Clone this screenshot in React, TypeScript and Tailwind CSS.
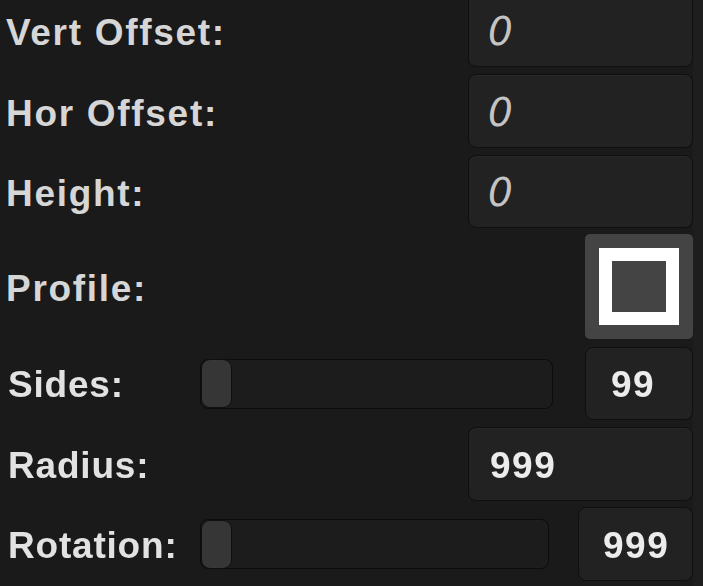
import React from "react";

const font = { fontFamily: '"Liberation Sans", Arial, sans-serif' };

function Field({ w, children }: { w: string; children: React.ReactNode }) {
  return (
    <div
      className={`${w} h-full shrink-0 rounded-[8px] bg-[#222222] border border-[#0f0f0f] flex items-center shadow-[inset_0_1px_0_rgba(255,255,255,0.03)]`}
    >
      {children}
    </div>
  );
}

function Slider({ w }: { w: string }) {
  return (
    <div className={`${w} h-[50px] shrink-0 rounded-[8px] bg-[#1c1c1c] border border-[#0c0c0c] flex items-center`}>
      <div className="w-[31px] h-[49px] rounded-[9px] bg-[#363636] border border-[#0f0f0f]" />
    </div>
  );
}

const topLabel = "pl-[6px] text-[37px] font-bold tracking-[1.7px] text-[#d6d6d6] leading-none translate-y-[2px]";
const botLabel = "pl-[8px] text-[37px] font-bold tracking-[0.8px] text-[#e2e2e2] leading-none blur-[0.7px] translate-y-[1px]";
const zero = "pl-[19px] text-[39px] italic text-[#c4c4c4] leading-none translate-y-[1px] [font-family:'DejaVu_Sans',sans-serif]";
const num = "text-[37px] font-bold tracking-[1.5px] text-[#ececec] leading-none blur-[0.6px] translate-y-[1px]";

export default function App() {
  return (
    <div className="w-[703px] h-[586px] overflow-hidden bg-[#1a1a1a] flex" style={font}>
      <div className="w-[693px] flex flex-col mt-[-7px]">
        <div className="h-[74px] flex items-center justify-between">
          <span className={topLabel}>Vert Offset:</span>
          <Field w="w-[225px]">
            <span className={zero}>0</span>
          </Field>
        </div>
        <div className="h-[74px] mt-[7px] flex items-center justify-between">
          <span className={topLabel}>Hor Offset:</span>
          <Field w="w-[225px]">
            <span className={zero}>0</span>
          </Field>
        </div>
        <div className="h-[73px] mt-[7px] flex items-center justify-between">
          <span className={topLabel}>Height:</span>
          <Field w="w-[225px]">
            <span className={zero}>0</span>
          </Field>
        </div>
        <div className="h-[105px] mt-[6px] flex items-center justify-between">
          <span className={topLabel}>Profile:</span>
          <div className="w-[108px] h-full rounded-[5px] bg-[#444444] flex items-center justify-center">
            <div className="w-[80px] h-[77px] border-[13px] border-white bg-[#444444]" />
          </div>
        </div>
        <div className="h-[73px] mt-[8px] flex items-center">
          <span className={`w-[200px] shrink-0 ${botLabel}`}>Sides:</span>
          <Slider w="w-[353px]" />
          <div className="ml-[32px]">
            <div className="w-[108px] h-[73px] rounded-[8px] bg-[#222222] border border-[#0f0f0f] flex items-center">
              <span className={`pl-[25px] ${num}`}>99</span>
            </div>
          </div>
        </div>
        <div className="h-[74px] mt-[7px] flex items-center justify-between">
          <span className={botLabel}>Radius:</span>
          <Field w="w-[225px]">
            <span className={`pl-[21px] ${num}`}>999</span>
          </Field>
        </div>
        <div className="h-[74px] mt-[6px] flex items-center">
          <span className={`w-[200px] shrink-0 ${botLabel}`}>Rotation:</span>
          <Slider w="w-[349px]" />
          <div className="ml-[29px]">
            <div className="w-[115px] h-[74px] rounded-[8px] bg-[#222222] border border-[#0f0f0f] flex items-center">
              <span className={`pl-[24px] ${num}`}>999</span>
            </div>
          </div>
        </div>
      </div>
      <div className="w-[10px] h-full bg-[#1e1e1e]" />
    </div>
  );
}
